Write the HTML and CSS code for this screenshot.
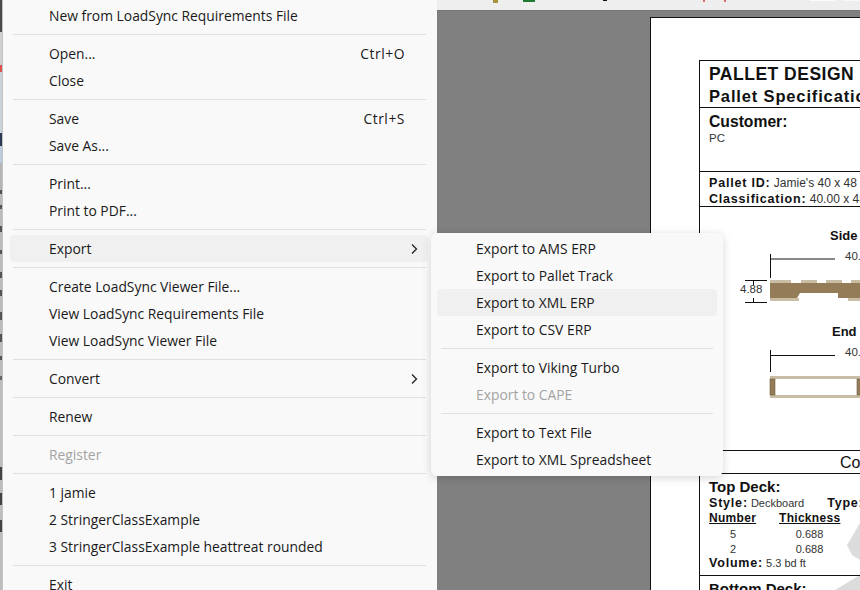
FILE: index.html
```html
<!DOCTYPE html>
<html lang="en">
<head>
<meta charset="utf-8">
<title>File menu</title>
<link rel="stylesheet" href="styles.css">
</head>
<body>
<div class="stage">
  <div class="edge"></div>
  <nav class="menu">
    <div class="row">New from LoadSync Requirements File</div>
    <hr class="sep">
    <div class="row"><span>Open...</span><span class="key">Ctrl+O</span></div>
    <div class="row">Close</div>
    <hr class="sep">
    <div class="row"><span>Save</span><span class="key">Ctrl+S</span></div>
    <div class="row">Save As...</div>
    <hr class="sep">
    <div class="row">Print...</div>
    <div class="row">Print to PDF...</div>
    <hr class="sep">
    <div class="row hover"><span>Export</span><svg class="chev" viewBox="0 0 8 12"><path d="M2 1.5 6.5 6 2 10.5"/></svg></div>
    <hr class="sep">
    <div class="row">Create LoadSync Viewer File...</div>
    <div class="row">View LoadSync Requirements File</div>
    <div class="row">View LoadSync Viewer File</div>
    <hr class="sep">
    <div class="row"><span>Convert</span><svg class="chev" viewBox="0 0 8 12"><path d="M2 1.5 6.5 6 2 10.5"/></svg></div>
    <hr class="sep">
    <div class="row">Renew</div>
    <hr class="sep">
    <div class="row off">Register</div>
    <hr class="sep">
    <div class="row">1 jamie</div>
    <div class="row">2 StringerClassExample</div>
    <div class="row">3 StringerClassExample heattreat rounded</div>
    <hr class="sep">
    <div class="row">Exit</div>
  </nav>
  <main class="app">
    <div class="toolbar">
      <i class="tick tan"></i>
      <i class="tick green"></i>
      <i class="tick black"></i>
      <i class="tick red"></i>
      <i class="tick red2"></i>
      <i class="tick white"></i>
      <i class="tick white2"></i>
    </div>
    <div class="workspace">
      <article class="page">
        <svg class="mark" width="41" height="90" viewBox="0 0 41 90"><path d="M41 23 28 45l5 10 8 5ZM41 75 16 90h25Z"/></svg>
        <div class="doc">
          <header class="cell head">
            <div class="h1">PALLET DESIGN</div>
            <div class="h2">Pallet Specification</div>
          </header>
          <section class="cell cust">
            <div class="h3">Customer:</div>
            <div class="small">PC</div>
          </section>
          <section class="cell ident">
            <div class="line"><b>Pallet ID:</b> Jamie's 40 x 48</div>
            <div class="line"><b>Classification:</b> 40.00 x 48.00</div>
          </section>
          <section class="cell drawing">
            <svg class="draw" width="160" height="243" viewBox="0 0 160 243">
              <g class="lines">
                <path d="M70.5 47V71M70 52H135M45 73.5H67M45 95.5H67M53.5 73V78M53.5 91V96"/>
                <path d="M70.5 143V165M70 148.5H135"/>
              </g>
              <path class="wood" d="M70 76H160V91H138V86H100L97 91H70Z"/>
              <path class="lite" d="M70 73H91V76H70ZM101 73H117V76H101ZM126 73H142V76H126ZM151 73H160V76H151ZM70 91H99V94H70ZM148 91H160V94H148Z"/>
              <rect class="lite" x="70" y="169" width="90" height="3"/>
              <rect class="lite" x="70" y="188" width="90" height="3"/>
              <rect class="wood edged" x="70" y="172" width="5" height="16"/>
              <rect class="wood edged" x="157" y="172" width="5" height="16"/>
              <text class="lbl" x="130" y="33">Side</text>
              <text class="num" x="145" y="53">40.</text>
              <text class="num" x="40" y="86">4.88</text>
              <text class="lbl" x="132" y="129">End</text>
              <text class="num" x="145" y="149">40.</text>
            </svg>
          </section>
          <section class="cell band"><span>Components</span></section>
          <section class="cell deck">
            <div class="h4">Top Deck:</div>
            <div class="line"><b>Style:</b> Deckboard <b class="gap">Type:</b></div>
            <div class="cols ul"><b>Number</b><b>Thickness</b></div>
            <div class="cols vals first"><span>5</span><span>0.688</span></div>
            <div class="cols vals"><span>2</span><span>0.688</span></div>
            <div class="line"><b>Volume:</b> 5.3 bd ft</div>
          </section>
          <section class="cell next">
            <div class="h4">Bottom Deck:</div>
          </section>
        </div>
      </article>
    </div>
  </main>
  <nav class="menu sub">
    <div class="row">Export to AMS ERP</div>
    <div class="row">Export to Pallet Track</div>
    <div class="row hover">Export to XML ERP</div>
    <div class="row">Export to CSV ERP</div>
    <hr class="sep">
    <div class="row">Export to Viking Turbo</div>
    <div class="row off">Export to CAPE</div>
    <hr class="sep">
    <div class="row">Export to Text File</div>
    <div class="row">Export to XML Spreadsheet</div>
  </nav>
</div>
</body>
</html>
```

FILE: styles.css
```css
* { box-sizing: border-box; }
html, body { margin: 0; padding: 0; }
.stage {
  position: relative;
  display: flex;
  width: 860px;
  height: 590px;
  overflow: hidden;
  background: #f0f0f0;
  font-family: "Open Sans", "Noto Sans", sans-serif;
}
.edge {
  flex: 0 0 3px;
  border-right: 1px solid #c4c4c4;
  background: linear-gradient(180deg,
    #4a4a4a 0 32px, #cfcfcf 32px 65px, #d9534f 65px 72px, #c9d3dc 72px 133px,
    #2c3a55 133px 146px, #bccbdc 146px 163px, #b5b5b5 163px 190px,
    #555 190px 194px, #bbb 194px 205px, #555 205px 209px, #bbb 209px 226px,
    #555 226px 232px, #bbb 232px 250px, #555 250px 254px, #bbb 254px 272px,
    #555 272px 278px, #bbb 278px 290px, #555 290px 296px, #bbb 296px 312px,
    #555 312px 320px, #bbb 320px 334px, #555 334px 342px, #bbb 342px 356px,
    #555 356px 360px, #bbb 360px 376px, #666 376px 380px, #bdbdbd 380px 467px,
    #444 467px 480px, #bdbdbd 480px 493px, #444 493px 505px, #bdbdbd 505px 520px,
    #444 520px 532px, #bdbdbd 532px);
}
.menu {
  flex: 0 0 434px;
  height: 590px;
  padding: 2px 9px 0 7px;
  background: #f9f9f9;
  color: #1a1a1a;
  font-size: 13.85px;
}
.row {
  display: flex;
  align-items: center;
  justify-content: space-between;
  height: 27px;
  padding: 0 10px 0 39px;
  border-radius: 4px;
  white-space: nowrap;
}
.hover { background: #f0f0f0; }
.off { color: #a3a3a3; }
.key { padding-right: 13px; letter-spacing: .55px; }
.sep {
  height: 1px;
  margin: 5px 2px 5px 3px;
  border: 0;
  background: #e0e0e0;
}
.chev { width: 8px; height: 12px; }
.chev path { fill: none; stroke: #222; stroke-width: 1.3; }
.sub {
  position: absolute;
  left: 431px;
  top: 233px;
  width: 292px;
  height: 243px;
  padding: 2px 6px;
  border-radius: 6px;
  box-shadow: 0 2px 10px rgba(0, 0, 0, .16);
}
.sub .row { padding-left: 39px; }
.sub .sep { margin-left: 4px; margin-right: 4px; }
.app {
  display: flex;
  flex: 1;
  flex-direction: column;
  min-width: 0;
}
.toolbar {
  display: flex;
  align-items: flex-start;
  flex: 0 0 11px;
  background: #eeeeee;
  border-bottom: 1px solid #777;
}
.tick { display: block; height: 2px; }
.tan { width: 5px; margin-left: 56px; height: 3px; background: #a8923c; }
.green { width: 12px; margin-left: 25px; background: #1f7a33; }
.black { width: 4px; margin-left: 68px; height: 1px; background: #111; }
.red { width: 2px; margin-left: 96px; background: #d46a6a; }
.red2 { width: 2px; margin-left: 19px; background: #d46a6a; }
.white { width: 25px; margin-left: 84px; height: 1px; background: #fbfbfb; }
.white2 { width: 17px; margin-left: 8px; height: 1px; background: #f4fbf2; }
.workspace {
  flex: 1;
  padding: 6px 0 0 213px;
  background: #808080;
}
.page {
  position: relative;
  isolation: isolate;
  width: 500px;
  height: 700px;
  padding: 42px 0 0 48px;
  background: #fff;
  border: 1px solid #111;
  font-family: "Liberation Sans", Arial, sans-serif;
  color: #111;
  overflow: hidden;
}
.doc {
  width: 420px;
  border: 1px solid #111;
  border-width: 1px 1px 0;
}
.cell { padding: 0 9px; border-bottom: 1px solid #111; }
.head { height: 47px; padding-top: 3px; }
.h1 { font-size: 17.5px; font-weight: 700; line-height: 21px; letter-spacing: .5px; }
.h2 { font-size: 16.5px; font-weight: 700; line-height: 22px; letter-spacing: .85px; }
.cust { height: 64px; padding-top: 5px; }
.h3 { font-size: 15.7px; font-weight: 700; line-height: 18px; }
.small { margin-top: 1px; font-size: 11.5px; line-height: 12px; color: #333; }
.ident { height: 35px; padding-top: 4px; }
.line { font-size: 12px; line-height: 15.5px; white-space: nowrap; color: #333; }
.line b { font-size: 12.5px; letter-spacing: .8px; color: #111; }
.drawing { height: 244px; padding: 0; }
.draw { display: block; overflow: visible; }
.lines path { fill: none; stroke: #111; stroke-width: 1; }
.wood { fill: #937c57; }
.edged { stroke: #6e5f43; stroke-width: .6; }
.lite { fill: #c9bda5; }
.lbl { font-size: 13px; font-weight: 700; fill: #111; }
.num { font-size: 11.5px; fill: #333; }
.band { height: 23px; padding-left: 140px; }
.band span { font-size: 16px; line-height: 23px; }
.deck { height: 102px; padding-top: 4px; }
.deck .line { font-size: 11px; line-height: 15px; }
.deck .line b { font-size: 12.5px; }
.h4 { font-size: 15px; font-weight: 700; line-height: 18px; }
.gap { margin-left: 20px; }
.cols { display: grid; grid-template-columns: 48px 61px; column-gap: 22px; font-size: 11px; line-height: 14.5px; }
.ul { line-height: 14px; }
.ul b { font-size: 12px; text-decoration: underline; letter-spacing: .3px; }
.first { margin-top: 2px; }
.vals span { text-align: center; color: #333; }
.next { height: 40px; padding-top: 4px; border: 0; }
.mark { position: absolute; z-index: -1; left: 168px; top: 482px; }
.mark path { fill: #dcdcdc; }
```
